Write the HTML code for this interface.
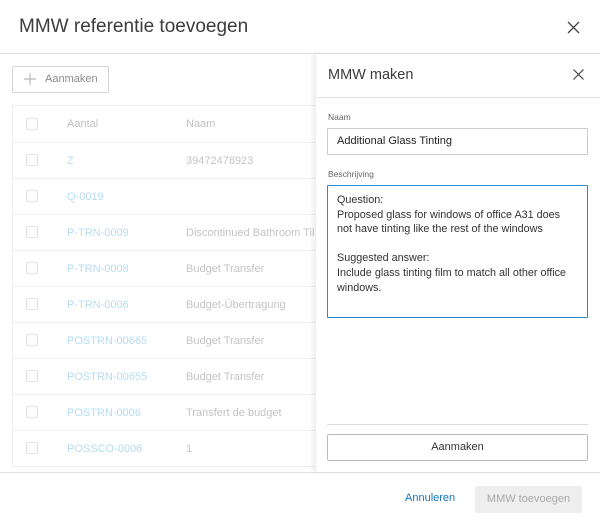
<!DOCTYPE html><html><head><style>
*{box-sizing:border-box;margin:0;padding:0}
body{width:600px;height:525px;background:#fff;font-family:"Liberation Sans",sans-serif;position:relative;overflow:hidden;color:#3c3c3c}
.a{position:absolute}
.cb{position:absolute;left:26px;width:12px;height:12px;border:1px solid #e3e3e3;border-radius:1px}
.row{position:absolute;left:13px;width:302px;height:36px;border-top:1px solid #f1f1f1;font-size:11px}
.row .id{position:absolute;left:54px;top:12px;color:#b6dcf2}
.row .nm{position:absolute;left:173px;top:12px;color:#c4c4c4;white-space:nowrap}
.row .cb{left:13px;top:11px}
</style></head><body>
<div class="a" style="left:19px;top:16px;font-size:19px;color:#3c3c3c">MMW referentie toevoegen</div>
<svg class="a" style="left:567px;top:21px" width="13" height="13"><path d="M1 1L12 12M12 1L1 12" stroke="#444" stroke-width="1.3"/></svg>
<div class="a" style="left:0;top:53px;width:600px;height:1px;background:#ddd"></div>
<div class="a" style="left:12px;top:66px;width:97px;height:27px;border:1px solid #d5d5d5;border-radius:2px"></div>
<svg class="a" style="left:24px;top:73px" width="12" height="12"><path d="M6 0V12M0 6H12" stroke="#bbb" stroke-width="1.2"/></svg>
<div class="a" style="left:45px;top:73px;font-size:11px;color:#8a8a8a">Aanmaken</div>
<div class="a" style="left:12px;top:105px;width:304px;height:362px;border:1px solid #eee;border-right:none"></div>
<div class="cb" style="top:118px"></div>
<div class="a" style="left:67px;top:118px;font-size:11px;color:#c0c0c0">Aantal</div>
<div class="a" style="left:186px;top:118px;font-size:11px;color:#c0c0c0">Naam</div>
<div class="row" style="top:142px"><div class="cb"></div><div class="id">Z</div><div class="nm">39472478923</div></div>
<div class="row" style="top:178px"><div class="cb"></div><div class="id">Q-0019</div><div class="nm"></div></div>
<div class="row" style="top:214px"><div class="cb"></div><div class="id">P-TRN-0009</div><div class="nm">Discontinued Bathroom Tile</div></div>
<div class="row" style="top:250px"><div class="cb"></div><div class="id">P-TRN-0008</div><div class="nm">Budget Transfer</div></div>
<div class="row" style="top:286px"><div class="cb"></div><div class="id">P-TRN-0006</div><div class="nm">Budget-Übertragung</div></div>
<div class="row" style="top:322px"><div class="cb"></div><div class="id">POSTRN-00665</div><div class="nm">Budget Transfer</div></div>
<div class="row" style="top:358px"><div class="cb"></div><div class="id">POSTRN-00655</div><div class="nm">Budget Transfer</div></div>
<div class="row" style="top:394px"><div class="cb"></div><div class="id">POSTRN-0006</div><div class="nm">Transfert de budget</div></div>
<div class="row" style="top:430px"><div class="cb"></div><div class="id">POSSCO-0006</div><div class="nm">1</div></div>
<div class="a" style="left:315px;top:54px;width:285px;height:418px;background:#fff;box-shadow:-3px 0 4px rgba(0,0,0,0.06);border-left:1px solid #eee"></div>
<div class="a" style="left:328px;top:67px;font-size:14.5px;color:#3c3c3c">MMW maken</div>
<svg class="a" style="left:573px;top:69px" width="11" height="11"><path d="M0.5 0.5L10.5 10.5M10.5 0.5L0.5 10.5" stroke="#444" stroke-width="1.2"/></svg>
<div class="a" style="left:315px;top:97px;width:285px;height:1px;background:#e3e3e3"></div>
<div class="a" style="left:328px;top:112px;font-size:8.5px;color:#666">Naam</div>
<div class="a" style="left:327px;top:128px;width:261px;height:27px;border:1px solid #ccc;border-radius:1px;font-size:11px;color:#222;padding:6px 9px">Additional Glass Tinting</div>
<div class="a" style="left:328px;top:169px;font-size:8.5px;color:#666">Beschrijving</div>
<div class="a" style="left:327px;top:185px;width:261px;height:133px;border:1px solid #2a8ad0;border-radius:1px;font-size:10.8px;line-height:14.6px;color:#333;padding:7px 16px 7px 9px">Question:<br>Proposed glass for windows of office A31 does not have tinting like the rest of the windows<br><br>Suggested answer:<br>Include glass tinting film to match all other office windows.</div>
<div class="a" style="left:327px;top:424px;width:261px;height:1px;background:#ddd"></div>
<div class="a" style="left:327px;top:434px;width:261px;height:27px;border:1px solid #bbb;border-radius:2px;font-size:11px;text-align:center;line-height:25px;color:#333">Aanmaken</div>
<div class="a" style="left:0;top:472px;width:600px;height:1px;background:#e0e0e0"></div>
<div class="a" style="left:405px;top:492px;font-size:11px;color:#1877c0">Annuleren</div>
<div class="a" style="left:475px;top:486px;width:107px;height:27px;background:#eee;border-radius:2px;font-size:11px;text-align:center;line-height:27px;color:#a8a8a8">MMW toevoegen</div>
</body></html>
